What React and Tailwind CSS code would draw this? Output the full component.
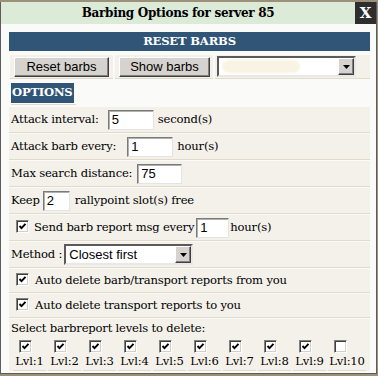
import React from "react";

const serif = { fontFamily: '"DejaVu Serif", Georgia, serif' };

function Check({ checked = true }) {
  return (
    <span className="inline-flex w-[13px] h-[13px] shrink-0 bg-white border border-t-[#808080] border-l-[#808080] border-b-[#ffffff] border-r-[#ffffff] shadow-[inset_1px_1px_0_#404040,inset_-1px_-1px_0_#d4d0c8] items-center justify-center">
      {checked && (
        <svg width="9" height="9" viewBox="0 0 9 9">
          <path d="M1.5 4 L3.5 6.2 L7.5 1.8" fill="none" stroke="#000" strokeWidth="1.9" />
        </svg>
      )}
    </span>
  );
}

function Input({ value, w }) {
  return (
    <span
      className={`inline-flex items-center h-[20px] ${w} bg-white border border-t-[#7a7a7a] border-l-[#7a7a7a] border-b-[#e4e4e4] border-r-[#e4e4e4] shadow-[inset_1px_1px_0_#b0b0b0] pl-[3px] text-[13px] tracking-normal text-black`}
      style={{ fontFamily: '"Liberation Sans", Arial, sans-serif' }}
    >
      {value}
    </span>
  );
}

function Btn({ children, w }) {
  return (
    <span
      className={`inline-flex items-center justify-center h-[20px] ${w} bg-[#d6d3ce] border border-t-[#ffffff] border-l-[#ffffff] border-b-[#404040] border-r-[#404040] shadow-[inset_-1px_-1px_0_#808080] text-[13px] text-black`}
      style={{ fontFamily: '"Liberation Sans", Arial, sans-serif' }}
    >
      {children}
    </span>
  );
}

function Select({ w, children }) {
  return (
    <span
      className={`inline-flex items-center h-[21px] ${w} bg-white border-2 border-t-[#5a5a5a] border-l-[#5a5a5a] border-b-[#e8e8e8] border-r-[#e8e8e8] text-[13px] tracking-normal text-black`}
      style={{ fontFamily: '"Liberation Sans", Arial, sans-serif' }}
    >
      <span className="flex-1 pl-[3px] flex items-center">{children}</span>
      <span className="w-[16px] h-[17px] bg-[#d6d3ce] border border-t-[#ffffff] border-l-[#ffffff] border-b-[#404040] border-r-[#404040] shadow-[inset_-1px_-1px_0_#808080] flex items-center justify-center">
        <svg width="7" height="4" viewBox="0 0 7 4">
          <path d="M0 0 H7 L3.5 4 Z" fill="#000" />
        </svg>
      </span>
    </span>
  );
}

function Row({ children, h = "h-[25px]" }) {
  return (
    <div className={`${h} bg-[#f4f1ea] border-b border-[#e2dbc9] flex items-center pl-[2px] text-[11.6px] tracking-[-0.2px] text-black`} style={serif}>
      {children}
    </div>
  );
}

export default function App() {
  const levels = [1, 2, 3, 4, 5, 6, 7, 8, 9, 10];
  return (
    <div className="w-[378px] h-[376px] bg-[#9d9079] pt-[2px] overflow-hidden">
      <div className="w-[377px] h-[372px] border-x border-b border-[#5c5c5c] bg-[#fafaf8] flex flex-col">
        <div className="h-[22px] flex">
          <div className="flex-1 bg-[#dcead8] flex items-center justify-center text-[12px] tracking-[-0.3px] font-bold text-black" style={serif}>
            Barbing Options for server 85
          </div>
          <div className="w-[21px] bg-[#2e2e2e] flex items-center justify-center text-white text-[15px] font-bold" style={serif}>
            X
          </div>
        </div>
        <div className="pl-[8px] pr-[6px] pt-[8px] flex flex-col">
          <div className="h-[19px] bg-[#305576] flex items-center justify-center text-white text-[11.6px] tracking-[-0.2px] font-bold" style={serif}>
            RESET BARBS
          </div>
          <div className="mt-[4px] flex gap-[2px] pl-[1px]">
            <div className="h-[24px] w-[103px] bg-[#f4f1ea] border-b border-[#e2dbc9] flex items-center pl-[4px]">
              <Btn w="w-[95px]">Reset barbs</Btn>
            </div>
            <div className="h-[24px] w-[98px] bg-[#f4f1ea] border-b border-[#e2dbc9] flex items-center pl-[4px]">
              <Btn w="w-[91px]">Show barbs</Btn>
            </div>
            <div className="h-[24px] flex-1 bg-[#f4f1ea] border-b border-[#e2dbc9] flex items-center pl-[2px]">
              <Select w="w-[139px]">
                <span className="w-[78px] h-[13px] rounded-full bg-[#f8f3e2] blur-[1px]" />
              </Select>
            </div>
          </div>
          <div className="mt-[4px] pl-[2px] flex">
            <div className="border-b border-[#e2dbc9] pr-[2px] pb-[1px]">
              <div className="h-[20px] px-[1px] bg-[#305576] flex items-center text-white text-[11.6px] tracking-[-0.2px] font-bold" style={serif}>
                OPTIONS
              </div>
            </div>
          </div>
          <div className="mt-[2px] flex flex-col gap-[1px]">
            <Row h="h-[26px]">
              <span>Attack interval:</span>
              <span className="ml-[9px]"><Input value="5" w="w-[46px]" /></span>
              <span className="ml-[4px]">second(s)</span>
            </Row>
            <Row h="h-[26px]">
              <span>Attack barb every:</span>
              <span className="ml-[11px]"><Input value="1" w="w-[46px]" /></span>
              <span className="ml-[4px]">hour(s)</span>
            </Row>
            <Row h="h-[26px]">
              <span>Max search distance:</span>
              <span className="ml-[5px]"><Input value="75" w="w-[45px]" /></span>
            </Row>
            <Row h="h-[26px]">
              <span>Keep</span>
              <span className="ml-[3px]"><Input value="2" w="w-[27px]" /></span>
              <span className="ml-[5px]">rallypoint slot(s) free</span>
            </Row>
            <Row h="h-[26px]">
              <span className="ml-[5px]"><Check /></span>
              <span className="ml-[5px]">Send barb report msg every</span>
              <span className="ml-[2px]"><Input value="1" w="w-[33px]" /></span>
              <span className="ml-[1px]">hour(s)</span>
            </Row>
            <Row h="h-[26px]">
              <span>Method :</span>
              <span className="ml-[2px]">
                <Select w="w-[129px]">Closest first</Select>
              </span>
            </Row>
            <Row h="h-[24px]">
              <span className="ml-[5px]"><Check /></span>
              <span className="ml-[6px]">Auto delete barb/transport reports from you</span>
            </Row>
            <Row h="h-[24px]">
              <span className="ml-[5px]"><Check /></span>
              <span className="ml-[6px]">Auto delete transport reports to you</span>
            </Row>
            <div className="bg-[#f4f1ea] flex flex-col text-[11.6px] tracking-[-0.2px] text-black" style={serif}>
              <div className="h-[20px] flex items-center pl-[2px]">Select barbreport levels to delete:</div>
              <div className="flex gap-[2px] pl-[4px]">
                {levels.map((l) => (
                  <div
                    key={l}
                    className={`${l === 10 ? "w-[38px]" : "w-[33px]"} flex flex-col border-b border-[#e2dbc9]`}
                  >
                    <div className="h-[15px] flex items-center pl-[6px]">
                      <Check checked={l !== 10} />
                    </div>
                    <div className="h-[16px] flex items-center justify-center">Lvl:{l}</div>
                  </div>
                ))}
              </div>
            </div>
          </div>
        </div>
      </div>
    </div>
  );
}
